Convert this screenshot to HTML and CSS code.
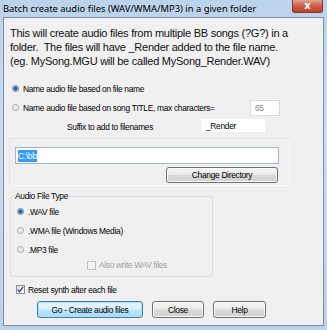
FILE: index.html
```html
<!DOCTYPE html>
<html lang="en">

<head>
    <meta charset="UTF-8">
    <title>Batch create audio files</title>
    <link rel="stylesheet" href="styles.css">
</head>

<body>
    <div class="window">
        <div class="titlebar">
            Batch create audio files (WAV/WMA/MP3) in a given folder
            <div class="close">x</div>
        </div>
        <div class="client">
            <p class="intro">This will create audio files from multiple BB songs (?G?) in a<br>
                folder.&nbsp; The files will have _Render added to the file name.<br>
                (eg. MySong.MGU will be called MySong_Render.WAV)</p>

            <div class="row first">
                <span class="radio checked"></span>
                <span>Name audio file based on file name</span>
            </div>
            <div class="row second">
                <span class="radio"></span>
                <span class="grow">Name audio file based on song TITLE, max characters=</span>
                <div class="field chars">65</div>
            </div>
            <div class="row suffix">
                <span class="suffix-label">Suffix to add to filenames</span>
                <div class="field render">_Render</div>
            </div>

            <div class="panel">
                <div class="field path"><span class="sel">C:\bb</span></div>
                <div class="btn change">Change Directory</div>
            </div>

            <fieldset class="group">
                <legend>Audio File Type</legend>
                <div class="row opt">
                    <span class="radio checked"></span>
                    <span>.WAV file</span>
                </div>
                <div class="row opt">
                    <span class="radio"></span>
                    <span>.WMA file (Windows Media)</span>
                </div>
                <div class="row opt">
                    <span class="radio"></span>
                    <span>.MP3 file</span>
                </div>
                <div class="row also">
                    <span class="check disabled"></span>
                    <span>Also write WAV files</span>
                </div>
            </fieldset>

            <div class="row reset">
                <span class="check">
                    <svg width="7" height="7" viewBox="0 0 7 7">
                        <path d="M0.8 3.6 L2.6 5.6 L6.2 0.9" fill="none" stroke="#2d4f8a" stroke-width="1.4"/>
                    </svg>
                </span>
                <span>Reset synth after each file</span>
            </div>

            <div class="buttons">
                <div class="btn go">Go - Create audio files</div>
                <div class="btn close-btn">Close</div>
                <div class="btn help">Help</div>
            </div>
        </div>
    </div>
</body>

</html>
```

FILE: styles.css
```css
body {
    margin: 0;
    background: #ffffff;
}

.window {
    width: 327px;
    height: 330px;
    box-sizing: border-box;
    padding: 0 3px 4px 3px;
    background: linear-gradient(to bottom, #bcd3ec, #c9dcf0 40%, #bcd2ea);
    display: flex;
    flex-direction: column;
}

.titlebar {
    position: relative;
    height: 17px;
    line-height: 17px;
    font-family: "Noto Sans", sans-serif;
    font-size: 9.4px;
    color: #000000;
    white-space: nowrap;
}

.close {
    position: absolute;
    top: 0;
    right: 1px;
    width: 31px;
    height: 13px;
    line-height: 12px;
    text-align: center;
    color: #ffffff;
    font-family: "DejaVu Sans", sans-serif;
    font-weight: bold;
    font-size: 10px;
    border: 1px solid #7d3a33;
    border-top: none;
    border-radius: 0 0 3px 3px;
    box-sizing: border-box;
    background: linear-gradient(to bottom, #e3a593, #cf5b45 50%, #c43e26);
}

.client {
    flex: 1;
    background: #f0f0f0;
    border: 1px solid #7b8ea6;
    font-family: "Liberation Sans", sans-serif;
    font-size: 8.4px;
    letter-spacing: -0.3px;
    color: #000000;
}

.intro {
    margin: 8px 0 0 6px;
    font-size: 11px;
    letter-spacing: -0.25px;
    line-height: 14px;
    color: #111111;
}

.row {
    display: flex;
    align-items: center;
    margin-left: 8px;
}

.row.first {
    margin-top: 12px;
    height: 17px;
}

.row.second {
    margin-top: 2px;
    height: 17px;
}

.grow {
    width: 227px;
}

.radio {
    width: 7px;
    height: 7px;
    border-radius: 50%;
    box-sizing: border-box;
    border: 1px solid #9aa3ab;
    background: radial-gradient(circle, #e6e6e6, #f8f8f8);
    margin-right: 4px;
    flex: none;
}

.radio.checked {
    border-color: #6f8aa6;
    background: radial-gradient(circle, #1f4f86 0, #2d6aa6 1.6px, #c9d7e4 2.6px);
}

.field {
    background: #ffffff;
    border: 1px solid #c9ced6;
    box-sizing: border-box;
    padding-left: 4px;
    display: flex;
    align-items: center;
}

.chars {
    width: 30px;
    height: 16px;
    color: #8a8a8a;
    border-color: #d8dbe0;
}

.row.suffix {
    margin-top: 2px;
    height: 15px;
    margin-left: 63px;
}

.suffix-label {
    width: 133px;
    padding-top: 3px;
}

.render {
    width: 66px;
    height: 15px;
    border-color: #f0f0f0;
    padding-left: 5px;
}

.panel {
    margin: 5px 0 0 5px;
    width: 281px;
    height: 48px;
    box-sizing: border-box;
    border: 1px solid #e2e4e7;
    border-right-color: #fafafa;
    border-bottom-color: #fafafa;
    padding: 8px 0 0 5px;
}

.path {
    width: 264px;
    height: 17px;
    border-color: #a5b3c4;
    padding-left: 2px;
}

.sel {
    background: #3399ff;
    color: #ffffff;
    padding: 1px 0;
}

.btn {
    box-sizing: border-box;
    height: 17px;
    border: 1px solid #707070;
    border-radius: 3px;
    background: linear-gradient(to bottom, #f6f6f6, #e9e9e9 48%, #dadada 52%, #d0d0d0);
    box-shadow: inset 0 0 0 1px #fbfbfb;
    display: flex;
    align-items: center;
    justify-content: center;
}

.change {
    width: 112px;
    height: 16px;
    margin: 3px 0 0 151px;
}

.group {
    margin: 5px 0 0 6px;
    width: 203px;
    height: 86px;
    box-sizing: border-box;
    border: 1px solid #d5dfe5;
    border-radius: 3px;
    padding: 0;
}

.group legend {
    padding: 0 1px;
    margin-left: 3px;
}

.row.opt {
    margin-left: 6px;
    height: 19px;
}

.row.opt:first-of-type {
    margin-top: 1px;
}

.check {
    width: 9px;
    height: 9px;
    box-sizing: border-box;
    border: 1px solid #8e8f8f;
    background: linear-gradient(135deg, #dcdcdc, #fbfbfb);
    margin-right: 3px;
    display: flex;
    align-items: center;
    justify-content: center;
    flex: none;
}

.check.disabled {
    border-color: #c0c0c0;
    background: #f4f4f4;
}

.row.also {
    margin-left: 76px;
    margin-top: 0;
    height: 12px;
    color: #a0a0a0;
}

.row.reset {
    margin: 7px 0 0 12px;
    height: 11px;
}

.buttons {
    display: flex;
    margin: 6px 0 0 33px;
    gap: 9px;
}

.go {
    width: 106px;
    border-color: #3c7fb1;
    box-shadow: inset 0 0 0 1px #b7e0f8;
    background: linear-gradient(to bottom, #eaf6fd, #d9f0fc 48%, #bee6fd 52%, #a7d9f5);
}

.close-btn {
    width: 52px;
}

.help {
    width: 53px;
}
```
